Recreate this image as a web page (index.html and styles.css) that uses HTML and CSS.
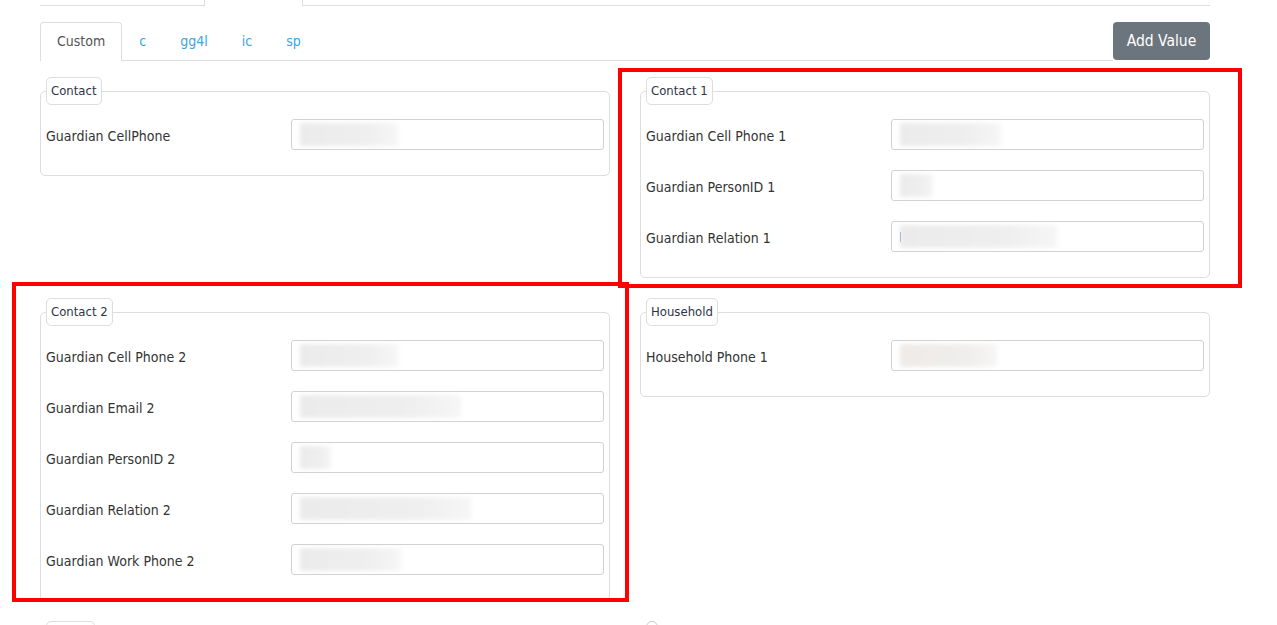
FILE: index.html
```html
<!DOCTYPE html>
<html lang="en">
<head>
    <meta charset="UTF-8">
    <title>Custom Values</title>
    <link rel="stylesheet" href="styles.css">
</head>
<body>
<div class="page">
    <div class="prev">
        <div class="prev-a"></div>
        <div class="prev-b"></div>
    </div>

    <div class="toolbar">
        <ul class="tabs">
            <li class="active">Custom</li>
            <li>c</li>
            <li>gg4l</li>
            <li>ic</li>
            <li>sp</li>
        </ul>
        <button class="btn-add">Add Value</button>
    </div>

    <div class="groups">
        <fieldset>
            <legend>Contact</legend>
            <div class="field">
                <label>Guardian CellPhone</label>
                <div class="input"><span class="redact w-98"></span></div>
            </div>
        </fieldset>

        <fieldset>
            <legend>Contact 1</legend>
            <div class="field">
                <label>Guardian Cell Phone 1</label>
                <div class="input"><span class="redact w-101"></span></div>
            </div>
            <div class="field">
                <label>Guardian PersonID 1</label>
                <div class="input"><span class="redact w-33"></span></div>
            </div>
            <div class="field">
                <label>Guardian Relation 1</label>
                <div class="input"><span class="caret"></span><span class="redact w-157"></span></div>
            </div>
        </fieldset>

        <fieldset>
            <legend>Contact 2</legend>
            <div class="field">
                <label>Guardian Cell Phone 2</label>
                <div class="input"><span class="redact w-98"></span></div>
            </div>
            <div class="field">
                <label>Guardian Email 2</label>
                <div class="input"><span class="redact w-161"></span></div>
            </div>
            <div class="field">
                <label>Guardian PersonID 2</label>
                <div class="input"><span class="redact w-31"></span></div>
            </div>
            <div class="field">
                <label>Guardian Relation 2</label>
                <div class="input"><span class="redact w-171"></span></div>
            </div>
            <div class="field">
                <label>Guardian Work Phone 2</label>
                <div class="input"><span class="redact w-101"></span></div>
            </div>
        </fieldset>

        <fieldset>
            <legend>Household</legend>
            <div class="field">
                <label>Household Phone 1</label>
                <div class="input"><span class="redact warm w-97"></span></div>
            </div>
        </fieldset>

        <!-- next group, only its top edge is on screen -->
        <fieldset class="next">
            <legend class="legend-stub"></legend>
            <div class="field">
                <span></span>
                <div class="input"></div>
            </div>
        </fieldset>

        <div class="more">
            <span class="dot"></span>
        </div>
    </div>
</div>

<!-- review marks drawn over the screenshot -->
<div class="mark mark-1"></div>
<div class="mark mark-2"></div>
</body>
</html>
```

FILE: styles.css
```css
body {
    margin: 0;
    font-family: "DejaVu Sans Condensed", "Liberation Sans", sans-serif;
    color: #333;
    background: #fff;
    overflow: hidden;
}

.page {
    width: 1170px;
    margin-left: 40px;
}

/* leftovers of the block above */
.prev {
    display: flex;
    height: 6px;
}

.prev-a {
    width: 164px;
    border-right: 1px solid #ddd;
    border-bottom: 1px solid #ddd;
}

.prev-b {
    flex: 1;
    margin-left: 97px;
    border-left: 1px solid #ddd;
    border-bottom: 1px solid #ddd;
}

.toolbar {
    display: flex;
    align-items: flex-start;
    margin-top: 16px;
}

.tabs {
    flex: 1;
    display: flex;
    list-style: none;
    margin: 0;
    padding: 0;
    height: 38px;
    border-bottom: 1px solid #ddd;
}

.tabs li {
    padding: 0 16px;
    border: 1px solid transparent;
    border-bottom: none;
    line-height: 37px;
    font-size: 14px;
    color: #3aa5e4;
}

.tabs li.active {
    color: #555;
    background: #fff;
    border-color: #ddd;
    border-radius: 4px 4px 0 0;
    height: 38px;
}

.btn-add {
    height: 38px;
    width: 97px;
    padding: 0;
    border: none;
    border-radius: 4px;
    background-color: #6c757d;
    color: #fff;
    font-family: inherit;
    font-size: 15.5px;
}

.groups {
    display: grid;
    grid-template-columns: 1fr 1fr;
    column-gap: 30px;
    row-gap: 20px;
    align-items: start;
    margin-top: 16px;
}

fieldset {
    margin: 0;
    min-width: 0;
    padding: 14px 5px 5px;
    border: 1px solid #ddd;
    border-radius: 5px;
}

legend {
    height: 28px;
    box-sizing: border-box;
    padding: 0 4px;
    border: 1px solid #ddd;
    border-radius: 5px;
    line-height: 26px;
    font-size: 13px;
    color: #2f3344;
}

.legend-stub {
    width: 49px;
}

.field {
    display: grid;
    grid-template-columns: 245px 1fr;
    align-items: center;
    margin-bottom: 20px;
}

.field label {
    font-size: 14px;
    padding-top: 2px;
}

.input {
    display: flex;
    align-items: center;
    height: 31px;
    box-sizing: border-box;
    padding: 0 8px;
    border: 1px solid #d0d0d6;
    border-radius: 3px;
    background: #fff;
}

.redact {
    display: block;
    height: 23px;
    background: linear-gradient(90deg, #ebebeb, #efefef 70%, #f6f6f6);
    filter: blur(2px);
}

.redact.warm {
    background: linear-gradient(90deg, #eeebe8, #f0eeec 70%, #f7f6f5);
}

.caret {
    display: block;
    width: 1px;
    height: 10px;
    margin-right: -1px;
    background: #3b7fc4;
}

.w-31 { width: 31px; }
.w-33 { width: 33px; }
.w-97 { width: 97px; }
.w-98 { width: 98px; }
.w-101 { width: 101px; }
.w-157 { width: 157px; }
.w-161 { width: 161px; }
.w-171 { width: 171px; }

.more {
    padding-left: 6px;
}

.dot {
    display: block;
    width: 10px;
    height: 10px;
    border: 1px solid #ccc;
    border-radius: 50%;
}

.mark {
    position: absolute;
    border: 4px solid #f00;
    box-sizing: border-box;
}

.mark-1 {
    left: 618px;
    top: 68px;
    width: 624px;
    height: 220px;
}

.mark-2 {
    left: 12px;
    top: 282px;
    width: 617px;
    height: 320px;
}
```
